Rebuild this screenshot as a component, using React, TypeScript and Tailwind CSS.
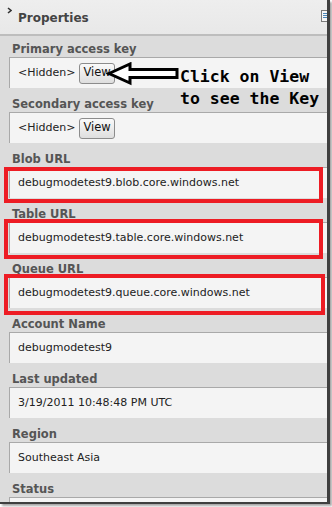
import React from 'react';

const Label: React.FC<{ text: string; first?: boolean }> = ({ text, first }) => (
  <div
    className={`flex items-end pl-[12px] pb-[1px] font-bold text-[11.5px] leading-[14px] text-[#555555] ${first ? 'h-[21px]' : 'h-[24px]'}`}
  >
    {text}
  </div>
);

const ValueBox: React.FC<{ children: React.ReactNode }> = ({ children }) => (
  <div className="ml-[9px] h-[31px] flex items-center pl-[8px] bg-[#f4f4f4] border-t border-l border-[#a9a9a9] text-[11px] text-[#222222]">
    {children}
  </div>
);

const ViewButton: React.FC = () => (
  <button className="ml-[4px] h-[21px] px-[3px] rounded-[3px] border border-[#8c8c8c] bg-gradient-to-b from-[#fafafa] to-[#dedede] text-[11.5px] text-[#111111] leading-none">
    View
  </button>
);

const fields: { label: string; value: string }[] = [
  { label: 'Blob URL', value: 'debugmodetest9.blob.core.windows.net' },
  { label: 'Table URL', value: 'debugmodetest9.table.core.windows.net' },
  { label: 'Queue URL', value: 'debugmodetest9.queue.core.windows.net' },
  { label: 'Account Name', value: 'debugmodetest9' },
  { label: 'Last updated', value: '3/19/2011 10:48:48 PM UTC' },
  { label: 'Region', value: 'Southeast Asia' },
];

// red annotation frames drawn over the screenshot
const redBoxes = [
  'top-[167px] h-[36px] w-[319px]',
  'top-[219px] h-[40px] w-[319px]',
  'top-[274px] h-[41px] w-[321px]',
];

export default function App() {
  return (
    <div className="w-[332px] h-[507px] bg-white overflow-hidden" style={{ fontFamily: '"DejaVu Sans", Verdana, sans-serif' }}>
      <div className="relative w-[330px] h-[504px] bg-[#dcdcdc] border-r-[3px] border-b-[2px] border-[#3f3f3f] shadow-[2px_2px_2px_rgba(0,0,0,0.35)] overflow-hidden">
        {/* header */}
        <div className="relative h-[36px] bg-gradient-to-b from-[#eeeeee] to-[#e8e8e8] border-b-2 border-[#bdbdbd] flex items-center pl-[18px] pt-[2px]">
          <svg className="absolute left-[7px] top-[7px]" width="5" height="7" viewBox="0 0 5 7">
            <path d="M1 1 L4 3.5 L1 6" fill="none" stroke="#333333" strokeWidth="1.6" />
          </svg>
          <span className="font-bold text-[12px] text-[#444444]">Properties</span>
          <svg className="absolute left-[321px] top-[10px]" width="8" height="13" viewBox="0 0 8 13">
            <rect x="0.5" y="0.5" width="7" height="11" fill="#f6f6f6" stroke="#7a7a7a" />
            <path d="M2 3.5 H6 M2 5.5 H6 M2 7.5 H6" stroke="#4a86b8" strokeWidth="1" />
          </svg>
        </div>

        <Label text="Primary access key" first />
        <ValueBox>
          <span>&lt;Hidden&gt;</span>
          <ViewButton />
        </ValueBox>
        <Label text="Secondary access key" />
        <ValueBox>
          <span>&lt;Hidden&gt;</span>
          <ViewButton />
        </ValueBox>
        {fields.map(f => (
          <React.Fragment key={f.label}>
            <Label text={f.label} />
            <ValueBox>{f.value}</ValueBox>
          </React.Fragment>
        ))}
        <Label text="Status" />
        <ValueBox>{''}</ValueBox>

        {redBoxes.map(c => (
          <div key={c} className={`absolute left-[4px] border-[4px] border-[#ed1c24] ${c}`} />
        ))}

        {/* arrow + callout */}
        <svg className="absolute left-[106px] top-[62px]" width="74" height="24" viewBox="0 0 74 24">
          <path d="M3 11.5 L24 2 L24 7.5 L71 7.5 L71 15.5 L24 15.5 L24 21 Z" fill="#ffffff" stroke="#000000" strokeWidth="3" strokeLinejoin="miter" />
        </svg>
        <div
          className="absolute left-[180px] top-[66px] font-bold text-[16.5px] leading-[22px] text-black whitespace-pre"
          style={{ fontFamily: '"DejaVu Sans Mono", "Liberation Mono", monospace' }}
        >
          {'Click on View\nto see the Key'}
        </div>
      </div>
    </div>
  );
}
